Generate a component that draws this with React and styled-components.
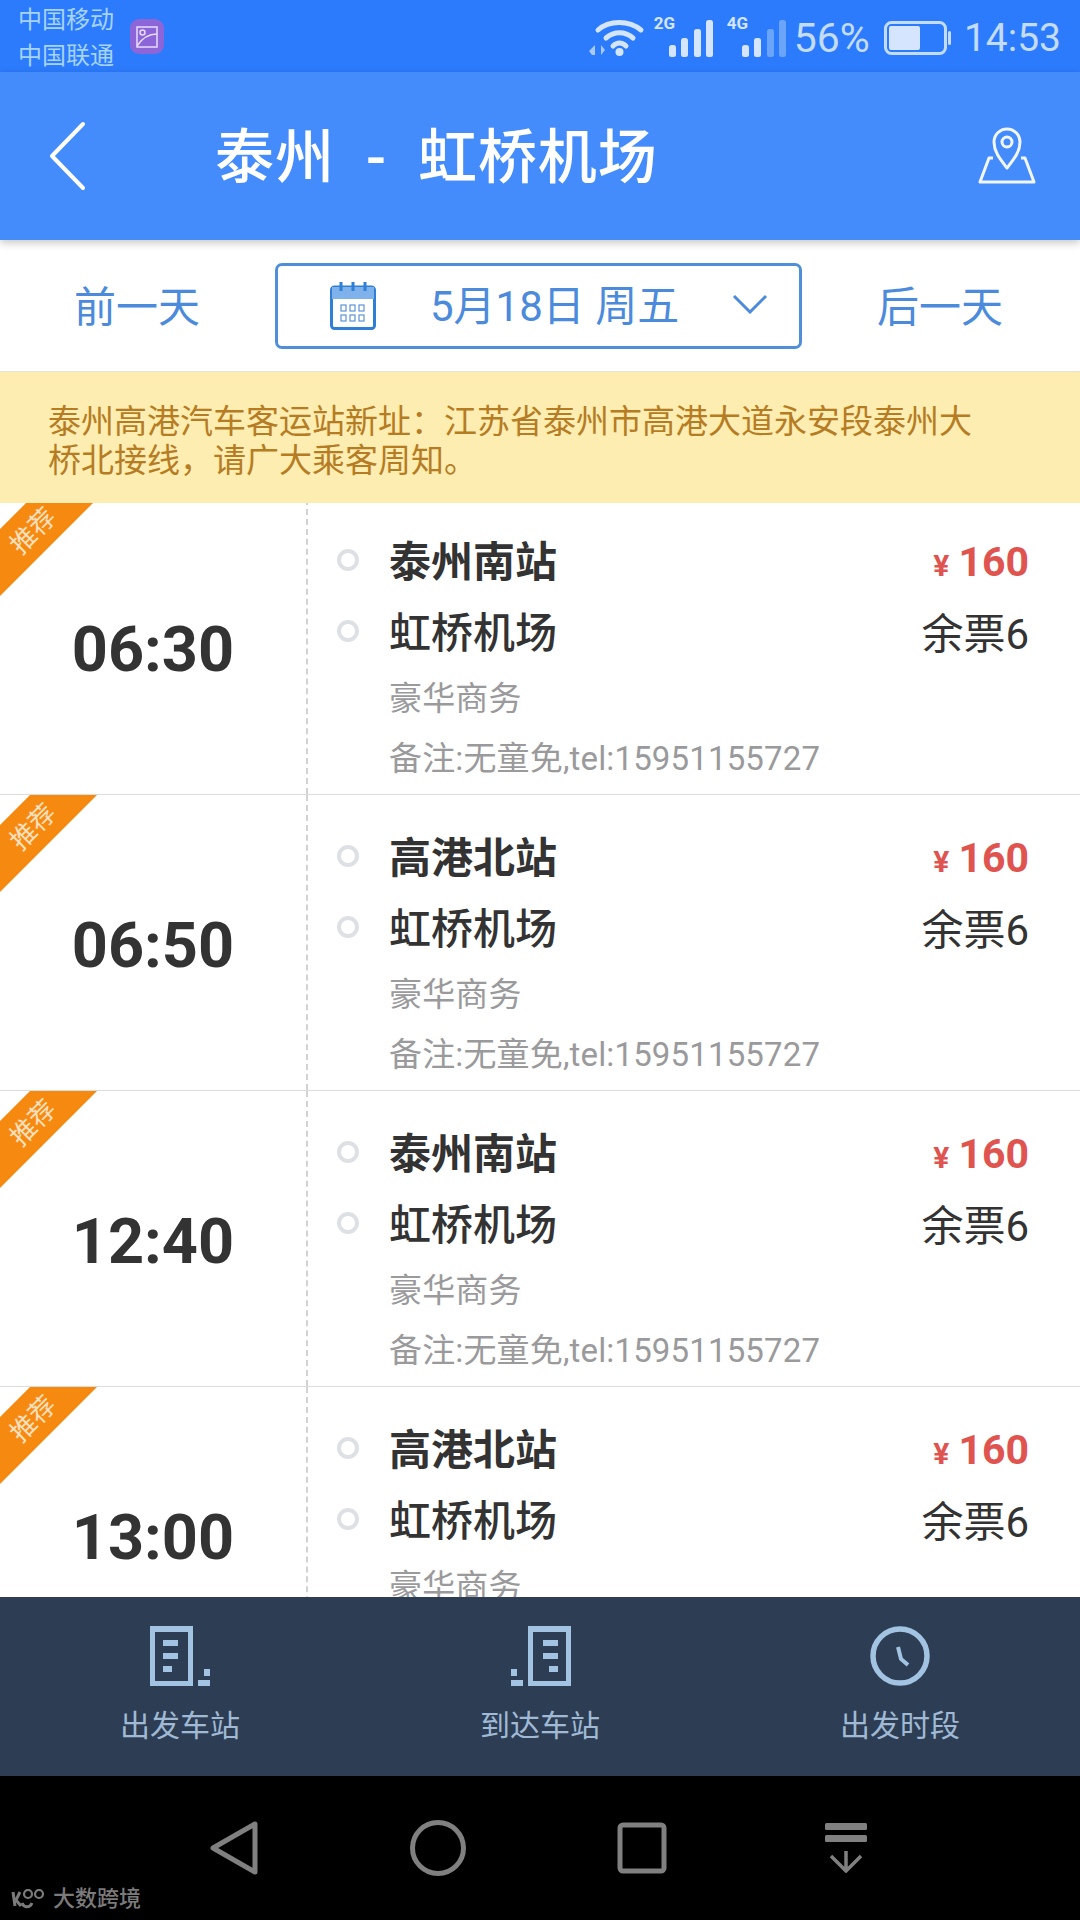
import React from "react";
import styled, { createGlobalStyle } from "styled-components";

const Global = createGlobalStyle`
  html, body { margin: 0; padding: 0; background: #000; }
  * { box-sizing: border-box; }
`;

const FONT = `Roboto, "Noto Sans CJK SC", sans-serif`;

const Page = styled.div`
  position: relative;
  width: 1080px;
  height: 1920px;
  display: flex;
  flex-direction: column;
  overflow: hidden;
  background: #fff;
  font-family: ${FONT};
`;

const StatusBar = styled.div`
  height: 72px;
  flex: none;
  background: #2b7bfc;
  display: flex;
  align-items: center;
  padding: 0 19px 0 18px;
  color: #c4dcfc;
`;

const Carriers = styled.div`
  font-size: 24px;
  line-height: 36px;
  color: #a6d3fc;
  margin-top: 3px;
`;

const AppBadge = styled.div`
  width: 34px;
  height: 35px;
  margin-left: 16px;
  margin-top: 1px;
  border-radius: 9px;
  background: #8c65d9;
  display: flex;
  align-items: center;
  justify-content: center;
`;

const StatusRight = styled.div`
  margin-left: auto;
  display: flex;
  align-items: center;
`;

const SignalWrap = styled.div`
  position: relative;
  width: 64px;
  height: 42px;
  margin-top: 4px;
  margin-left: ${(p) => p.$ml}px;
`;

const SignalLabel = styled.span`
  position: absolute;
  left: 0;
  top: -3px;
  font-size: 17px;
  line-height: 18px;
  font-weight: 700;
  color: #d4e5fd;
`;

const StatusText = styled.span`
  font-size: ${(p) => p.$size}px;
  line-height: 44px;
  font-weight: 400;
  margin-top: 4px;
  margin-left: ${(p) => p.$ml || 0}px;
`;

const BatterySlot = styled.div`
  display: flex;
  margin-left: 14px;
`;

const Header = styled.header`
  position: relative;
  z-index: 2;
  height: 168px;
  flex: none;
  background: #448bfc;
  box-shadow: 0 3px 8px rgba(0, 0, 0, 0.22);
  display: flex;
  align-items: center;
  padding: 0 44px 0 48px;
  color: #fff;
`;

const Title = styled.h1`
  margin: 4px 0 0 129px;
  font-size: 59px;
  line-height: 70px;
  font-weight: 500;
  white-space: pre;
  letter-spacing: 0.9px;
`;

const HeaderPin = styled.div`
  margin-left: auto;
  display: flex;
`;

const DateRow = styled.div`
  height: 132px;
  flex: none;
  background: #fff;
  border-bottom: 1px solid #e6e2d6;
  display: flex;
  align-items: center;
  justify-content: space-between;
  padding: 0 77px 0 74px;
  color: #4c8bdc;
`;

const DayLink = styled.span`
  font-size: 42px;
  line-height: 50px;
  width: 126px;
  white-space: nowrap;
  margin-top: 4px;
`;

const DateBox = styled.div`
  width: 527px;
  height: 86px;
  border: 3px solid #4f8fd9;
  border-radius: 7px;
  display: flex;
  align-items: center;
  padding: 0 31px 0 52px;
`;

const DateText = styled.span`
  font-size: 42px;
  line-height: 50px;
  margin-left: 54px;
  margin-top: 3px;
  white-space: pre;
`;

const Chevron = styled.div`
  margin-left: auto;
  display: flex;
  margin-top: -4px;
`;

const Notice = styled.div`
  position: relative;
  z-index: 1;
  height: 131px;
  flex: none;
  background: #fdedb0;
  color: #b67c24;
  font-size: 33px;
  line-height: 39px;
  padding: 30px 100px 0 48px;
`;

const List = styled.div`
  flex: 1;
  min-height: 0;
  margin-top: -4px;
  overflow: hidden;
`;

const Row = styled.div`
  position: relative;
  height: 296px;
  display: flex;
  border-bottom: 1px solid #dcdcdc;
  overflow: hidden;
`;

const Ribbon = styled.div`
  position: absolute;
  left: 0;
  top: 0;
  width: 97px;
  height: 97px;
  background: #f6890f;
  clip-path: polygon(30px 0, 97px 0, 0 97px, 0 30px);
`;

const RibbonText = styled.span`
  position: absolute;
  left: 7px;
  top: 11px;
  width: 52px;
  font-size: 26px;
  line-height: 42px;
  text-align: center;
  white-space: nowrap;
  color: #fde0bf;
  transform: rotate(-45deg);
`;

const TimeCell = styled.div`
  width: 306px;
  flex: none;
  display: flex;
  align-items: center;
  justify-content: center;
  font-size: 63px;
  font-weight: 700;
  color: #333;
  padding-top: 5px;
`;

const Details = styled.div`
  flex: 1;
  border-left: 2px dashed #d2d2d2;
  padding: 28px 51px 0 30px;
`;

const StationLine = styled.div`
  height: 71px;
  display: flex;
  align-items: center;
  color: #333;
`;

const Dot = styled.span`
  width: 22px;
  height: 22px;
  flex: none;
  border: 4px solid #dde1e5;
  border-radius: 50%;
  margin-right: 30px;
  margin-left: -1px;
  margin-top: -5px;
`;

const StationName = styled.span`
  font-size: 42px;
  line-height: 50px;
  font-weight: ${(p) => (p.$strong ? 700 : 500)};
`;

const Price = styled.span`
  margin-left: auto;
  margin-top: 2px;
  font-size: 41px;
  line-height: 50px;
  font-weight: 700;
  color: #e05450;
  white-space: pre;
`;

const Yen = styled.span`
  font-size: 30px;
  margin-right: 9px;
`;

const Seats = styled.span`
  margin-left: auto;
  margin-top: 2px;
  font-size: 42px;
  line-height: 50px;
  color: #333;
`;

const Meta = styled.div`
  height: 60px;
  padding-left: 51px;
  font-size: 33px;
  line-height: 60px;
  letter-spacing: 0.15px;
  color: #9a9a9c;
  white-space: nowrap;
`;

const BottomBar = styled.nav`
  position: relative;
  height: 179px;
  flex: none;
  background: #2d3e54;
  display: grid;
  grid-template-columns: repeat(3, 1fr);
  padding-top: 29px;
`;

const BarItem = styled.div`
  display: flex;
  flex-direction: column;
  align-items: center;
  color: #a3c3e2;
`;

const BarLabel = styled.span`
  margin-top: 18px;
  font-size: 30px;
  line-height: 44px;
  color: #a0bad6;
`;

const SystemNav = styled.div`
  position: relative;
  height: 144px;
  flex: none;
  background: #000;
  display: flex;
  justify-content: center;
  padding-top: 42px;
`;

const NavSlot = styled.div`
  width: 204px;
  height: 60px;
  display: flex;
  align-items: center;
  justify-content: center;
`;

const Watermark = styled.div`
  position: absolute;
  left: 10px;
  bottom: 8px;
  display: flex;
  align-items: center;
  color: #7b7b7b;
  font-size: 22px;
  line-height: 26px;
  font-weight: 500;
`;

const MarkText = styled.span`
  margin-left: 5px;
`;

const Wifi = () => (
  <svg width="56" height="40" viewBox="0 0 56 40" fill="none" style={{ marginTop: 2 }}>
    <path d="M9 13C20 3 40 3 52 13" stroke="#d4e5fd" strokeWidth="5" strokeLinecap="round" />
    <path d="M17 21C25 14 36 14 44 21" stroke="#d4e5fd" strokeWidth="5" strokeLinecap="round" />
    <path d="M24 29C28 25 33 25 37 29" stroke="#d4e5fd" strokeWidth="5" strokeLinecap="round" />
    <circle cx="30.500" cy="35" r="4" fill="#d4e5fd" />
    <path d="M6 28V38H3L0 34ZM12 28L16 33L12 38Z" fill="#a8c8fa" />
  </svg>
);

const Bars = ({ faded }) => (
  <svg width="50" height="40" viewBox="0 0 50 40" style={{ position: "absolute", left: 15, top: 1 }}>
    {[
      [0, 27, 12],
      [12, 20, 19],
      [25, 11, 28],
      [37, 2, 37],
    ].map(([x, y, h], i) => (
      <rect key={x} x={x} y={y} width="7" height={h} rx="2.500" fill={i >= faded ? "#6ba4fb" : "#d4e5fd"} />
    ))}
  </svg>
);

const Battery = () => (
  <svg width="68" height="34" viewBox="0 0 68 34" fill="none" style={{ marginTop: 3 }}>
    <rect x="1.500" y="1.500" width="60" height="31" rx="6" stroke="#c4dcfc" strokeWidth="3" />
    <rect x="5" y="5" width="31" height="24" rx="2" fill="#d4e5fd" />
    <rect x="64" y="10" width="3" height="14" rx="1.500" fill="#c4dcfc" />
  </svg>
);

const BackIcon = () => (
  <svg width="38" height="70" viewBox="0 0 38 70" fill="none">
    <path d="M35 3L4 35L35 67" stroke="#fff" strokeWidth="4" strokeLinecap="round" strokeLinejoin="round" />
  </svg>
);

const PinIcon = () => (
  <svg width="58" height="58" viewBox="0 0 58 58" fill="none" stroke="#f2f7ff" strokeWidth="3" strokeLinejoin="round">
    <path d="M29 41C22 32 16 25 16 15A13 13 0 0 1 42 15C42 25 36 32 29 41Z" />
    <circle cx="29" cy="15" r="5" />
    <path d="M15 31H11L2 55H56L47 31H43" />
  </svg>
);

const CalendarIcon = () => (
  <svg width="46" height="48" viewBox="0 0 46 48" fill="none">
    <rect x="1.500" y="5" width="43" height="41.500" rx="3" stroke="#2f7fd6" strokeWidth="3" />
    <rect x="2" y="5" width="42" height="12" fill="#7fb2ea" />
    <path d="M11 0V9M23 0V9M35 0V9" stroke="#2f7fd6" strokeWidth="3" />
    {[11, 20, 29].map((x) =>
      [23, 33].map((y) => <rect key={`${x}${y}`} x={x} y={y} width="5" height="6" stroke="#5c93d6" strokeWidth="1.200" />)
    )}
  </svg>
);

const ChevronIcon = () => (
  <svg width="36" height="20" viewBox="0 0 36 20" fill="none">
    <path d="M2 2L18 18L34 2" stroke="#4c8bdc" strokeWidth="3" />
  </svg>
);

const BuildingIcon = ({ mirrored }) => (
  <svg width="61" height="60" viewBox="0 0 61 60" fill="#a3c3e2" style={mirrored ? { transform: "scaleX(-1)" } : undefined}>
    <path fillRule="evenodd" d="M0 0H43V60H0ZM5 6V55H38V6Z" />
    <rect x="13" y="14" width="15" height="6" />
    <rect x="13" y="27" width="15" height="6" />
    <rect x="13" y="40" width="9" height="6" />
    <rect x="54" y="43" width="6" height="7" />
    <rect x="48" y="54" width="12" height="6" />
  </svg>
);

const ClockIcon = () => (
  <svg width="60" height="60" viewBox="0 0 60 60" fill="none" stroke="#a3c3e2">
    <circle cx="30" cy="30" r="27" strokeWidth="5.500" />
    <path d="M28 21L31 33L38 39" strokeWidth="4" />
  </svg>
);

const NavBack = () => (
  <svg width="48" height="54" viewBox="0 0 48 54" fill="none">
    <path d="M45 3V51L3 27Z" stroke="#808080" strokeWidth="5" strokeLinejoin="round" />
  </svg>
);

const NavHome = () => (
  <svg width="56" height="56" viewBox="0 0 56 56" fill="none">
    <circle cx="28" cy="28" r="25.500" stroke="#808080" strokeWidth="5" />
  </svg>
);

const NavRecent = () => (
  <svg width="50" height="52" viewBox="0 0 50 52" fill="none">
    <rect x="3" y="3" width="44" height="46" rx="3" stroke="#808080" strokeWidth="5" />
  </svg>
);

const NavDown = () => (
  <svg width="42" height="50" viewBox="0 0 42 50" fill="none">
    <rect x="0" y="0" width="42" height="7" rx="1.500" fill="#808080" />
    <rect x="0" y="12" width="42" height="7" rx="1.500" fill="#808080" />
    <path d="M21 28V48M6 33L21 48L36 33" stroke="#808080" strokeWidth="3.500" />
  </svg>
);

const MarkLogo = () => (
  <svg width="38" height="20" viewBox="0 0 38 20" fill="none" stroke="#7b7b7b" strokeWidth="2.200">
    <path d="M3 3L5 17M10 3L6 11L11 17" strokeWidth="3" />
    <path d="M12 14C14 19 20 19 22 14" strokeWidth="3" />
    <circle cx="18" cy="5" r="4" />
    <circle cx="29" cy="5" r="4" />
  </svg>
);

const trips = [
  { time: "06:30", from: "泰州南站" },
  { time: "06:50", from: "高港北站" },
  { time: "12:40", from: "泰州南站" },
  { time: "13:00", from: "高港北站" },
];

export default function App() {
  return (
    <Page>
      <Global />
      <StatusBar>
        <Carriers>
          中国移动
          <br />
          中国联通
        </Carriers>
        <AppBadge>
          <svg width="22" height="22" viewBox="0 0 22 22" fill="none" stroke="#e8dcfa" strokeWidth="1.500">
            <rect x="1" y="1" width="20" height="20" />
            <circle cx="6.500" cy="6.500" r="2.500" />
            <path d="M1 20C6 12 13 8 21 8" />
          </svg>
        </AppBadge>
        <StatusRight>
          <Wifi />
          <SignalWrap $ml={9}>
            <SignalLabel>2G</SignalLabel>
            <Bars faded={4} />
          </SignalWrap>
          <SignalWrap $ml={9}>
            <SignalLabel>4G</SignalLabel>
            <Bars faded={2} />
          </SignalWrap>
          <StatusText $ml={3} $size={41}>56%</StatusText>
          <BatterySlot>
            <Battery />
          </BatterySlot>
          <StatusText $ml={12} $size={39}>14:53</StatusText>
        </StatusRight>
      </StatusBar>

      <Header>
        <BackIcon />
        <Title>泰州  -  虹桥机场</Title>
        <HeaderPin>
          <PinIcon />
        </HeaderPin>
      </Header>

      <DateRow>
        <DayLink>前一天</DayLink>
        <DateBox>
          <CalendarIcon />
          <DateText>5月18日 周五</DateText>
          <Chevron>
            <ChevronIcon />
          </Chevron>
        </DateBox>
        <DayLink>后一天</DayLink>
      </DateRow>

      <Notice>
        泰州高港汽车客运站新址：江苏省泰州市高港大道永安段泰州大桥北接线，请广大乘客周知。
      </Notice>

      <List>
        {trips.map((t) => (
          <Row key={t.time}>
            <TimeCell>{t.time}</TimeCell>
            <Details>
              <StationLine>
                <Dot />
                <StationName $strong>{t.from}</StationName>
                <Price>
                  <Yen>¥</Yen>160
                </Price>
              </StationLine>
              <StationLine>
                <Dot />
                <StationName>虹桥机场</StationName>
                <Seats>余票6</Seats>
              </StationLine>
              <Meta>豪华商务</Meta>
              <Meta>备注:无童免,tel:15951155727</Meta>
            </Details>
            <Ribbon />
            <RibbonText>推荐</RibbonText>
          </Row>
        ))}
      </List>

      <BottomBar>
        <BarItem>
          <BuildingIcon />
          <BarLabel>出发车站</BarLabel>
        </BarItem>
        <BarItem>
          <BuildingIcon mirrored />
          <BarLabel>到达车站</BarLabel>
        </BarItem>
        <BarItem>
          <ClockIcon />
          <BarLabel>出发时段</BarLabel>
        </BarItem>
      </BottomBar>

      <SystemNav>
        <NavSlot>
          <NavBack />
        </NavSlot>
        <NavSlot>
          <NavHome />
        </NavSlot>
        <NavSlot>
          <NavRecent />
        </NavSlot>
        <NavSlot>
          <NavDown />
        </NavSlot>
        <Watermark>
          <MarkLogo />
          <MarkText>大数跨境</MarkText>
        </Watermark>
      </SystemNav>
    </Page>
  );
}
